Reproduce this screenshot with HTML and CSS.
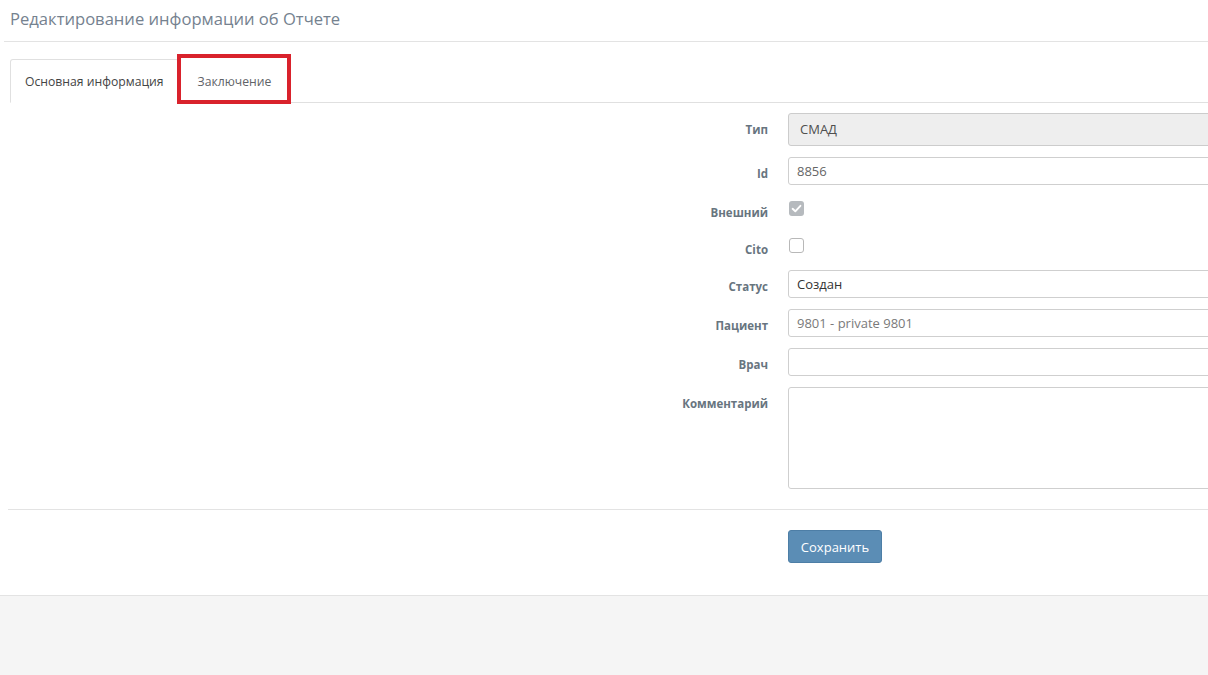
FILE: index.html
```html
<!DOCTYPE html>
<html lang="ru">
<head>
<meta charset="utf-8">
<title>Редактирование информации об Отчете</title>
<link rel="stylesheet" href="styles.css">
</head>
<body>
<div class="page">
  <div class="main">
    <div class="page-header">
      <h1 class="title">Редактирование информации об Отчете</h1>
    </div>

    <div class="tabs-wrap">
      <ul class="tabs">
        <li class="tab active"><span>Основная информация</span></li>
        <li class="tab"><span>Заключение</span></li>
      </ul>
      <div class="highlight"></div>
    </div>

    <form class="form">
      <div class="row">
        <label class="label">Тип</label>
        <div class="control"><div class="input input-tall disabled">СМАД</div></div>
      </div>
      <div class="row">
        <label class="label">Id</label>
        <div class="control"><div class="input readonly">8856</div></div>
      </div>
      <div class="row row-check">
        <label class="label">Внешний</label>
        <div class="control">
          <span class="check checked">
            <svg viewBox="0 0 15 15" width="15" height="15"><path d="M3.6 7.8 L6.3 10.3 L11.4 4.8" fill="none" stroke="#fff" stroke-width="1.9" stroke-linecap="round" stroke-linejoin="round"/></svg>
          </span>
        </div>
      </div>
      <div class="row row-check">
        <label class="label">Cito</label>
        <div class="control"><span class="check"></span></div>
      </div>
      <div class="row">
        <label class="label">Статус</label>
        <div class="control"><div class="input select">Создан</div></div>
      </div>
      <div class="row">
        <label class="label">Пациент</label>
        <div class="control"><div class="input muted">9801 - private 9801</div></div>
      </div>
      <div class="row">
        <label class="label">Врач</label>
        <div class="control"><div class="input"></div></div>
      </div>
      <div class="row">
        <label class="label">Комментарий</label>
        <div class="control"><div class="input textarea"></div></div>
      </div>

      <div class="divider"></div>

      <div class="actions">
        <button type="button" class="btn">Сохранить</button>
      </div>
    </form>
  </div>
  <div class="footer"></div>
</div>
</body>
</html>
```
FILE: styles.css
```css
html, body {
  margin: 0;
  padding: 0;
  height: 100%;
  overflow: hidden;
  background: #ffffff;
}

body {
  font-family: "Open Sans", "Noto Sans", "DejaVu Sans", sans-serif;
  font-size: 13px;
  color: #333;
}

.page {
  display: flex;
  flex-direction: column;
  min-height: 100%;
  width: 1240px;
}

.main {
  background: #fff;
}

.page-header {
  margin-left: 4px;
  padding: 8px 6px 0;
  height: 33px;
  border-bottom: 1px solid #e3e3e3;
}

.title {
  margin: 0;
  font-size: 16.6px;
  font-weight: 400;
  line-height: 22px;
  color: #75828f;
}

.tabs-wrap {
  position: relative;
  margin-top: 17px;
  margin-left: 10px;
}

.tabs {
  list-style: none;
  margin: 0;
  padding: 0;
  display: flex;
  border-bottom: 1px solid #e0e0e0;
  height: 43px;
}

.tab {
  padding: 0 14px;
  margin-right: 2px;
  margin-bottom: -1px;
  display: flex;
  align-items: center;
  font-size: 12.2px;
  color: #5f6368;
  border: 1px solid transparent;
  border-radius: 3px 3px 0 0;
  box-sizing: border-box;
  height: 44px;
}

.tab span {
  line-height: 18px;
  padding-top: 2px;
}

.tab.active {
  background: #fff;
  border-color: #e0e0e0;
  border-bottom-color: #fff;
  color: #444;
}

.tab + .tab {
  padding-left: 16px;
}

.highlight {
  position: absolute;
  left: 167px;
  top: -5px;
  width: 114px;
  height: 50px;
  box-sizing: border-box;
  border: 4px solid #d9222c;
  pointer-events: none;
}

.form {
  padding-top: 10px;
}

.row {
  display: grid;
  grid-template-columns: 768px 1fr;
  column-gap: 20px;
  margin-bottom: 11px;
}

.label {
  text-align: right;
  font-size: 11.5px;
  font-weight: 700;
  line-height: 16px;
  padding-top: 9px;
  color: #68757f;
}

.control {
  min-width: 0;
}

.input {
  height: 28px;
  box-sizing: border-box;
  border: 1px solid #cfcfcf;
  border-radius: 3px;
  background: #fff;
  padding: 0 8px;
  line-height: 26px;
  font-size: 13px;
  color: #555;
  width: 480px;
}

.input-tall {
  height: 33px;
  line-height: 31px;
  padding-left: 11px;
}

.disabled {
  background: #eeeeee;
  color: #4f4f4f;
  border-color: #cccccc;
}

.readonly {
  color: #666;
}

.select {
  color: #333;
}

.muted {
  color: #7a7a7a;
}

.textarea {
  height: 102px;
}

.row-check {
  height: 26px;
}

.check {
  display: block;
  margin-top: 5px;
  margin-left: 1px;
  width: 15px;
  height: 15px;
  box-sizing: border-box;
  border: 1px solid #b8b8b8;
  border-radius: 3px;
  background: #fff;
}

.check.checked {
  border: none;
  background: #b6babe;
}

.check svg {
  display: block;
}

.divider {
  margin: 20px 0 20px 8px;
  border-top: 1px solid #e3e3e3;
}

.actions {
  padding-left: 788px;
  padding-bottom: 32px;
}

.btn {
  display: block;
  width: 94px;
  height: 33px;
  border: 1px solid #4d7ea6;
  border-radius: 3px;
  background: #5b8db5;
  color: #fff;
  font-family: "Open Sans", "Noto Sans", sans-serif;
  font-size: 13px;
  padding: 0;
}

.footer {
  flex: 1;
  background: #f5f5f5;
  border-top: 1px solid #e3e3e3;
}
```
